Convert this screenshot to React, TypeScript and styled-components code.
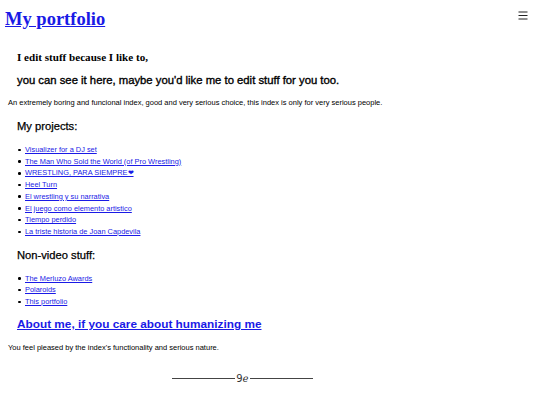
import styled, { createGlobalStyle } from "styled-components"

const GlobalStyle = createGlobalStyle`
  body {
    margin: 0;
    background: #ffffff;
    color: #000000;
    font-family: "Liberation Sans", Arial, sans-serif;
  }
`

const projects = [
  "Visualizer for a DJ set",
  "The Man Who Sold the World (of Pro Wrestling)",
  "WRESTLING, PARA SIEMPRE❤",
  "Heel Turn",
  "El wrestling y su narrativa",
  "El juego como elemento artistico",
  "Tiempo perdido",
  "La triste historia de Joan Capdevila",
]

const otherStuff = ["The Merluzo Awards", "Polaroids", "This portfolio"]

const App = () => (
  <>
    <GlobalStyle />
    <Page>
      <Header>
        <Title href="#">My portfolio</Title>
        <MenuButton aria-label="menu">
          <svg width="10" height="9" viewBox="0 0 10 9">
            <path d="M0.5 1h9M0.5 4.5h9M0.5 8h9" stroke="#222" strokeWidth="1" />
          </svg>
        </MenuButton>
      </Header>
      <Intro>
        <SerifLine>I edit stuff because I like to,</SerifLine>
        <Tagline>you can see it here, maybe you'd like me to edit stuff for you too.</Tagline>
      </Intro>
      <Small $gap={11}>
        An extremely boring and funcional index, good and very serious choice, this index is only for very serious people.
      </Small>
      <Section>
        <SectionTitle>My projects:</SectionTitle>
        <List>
          {projects.map((p) => (
            <Item key={p}>
              <ItemLink href="#">{p}</ItemLink>
            </Item>
          ))}
        </List>
        <SectionTitle>Non-video stuff:</SectionTitle>
        <List>
          {otherStuff.map((p) => (
            <Item key={p}>
              <ItemLink href="#">{p}</ItemLink>
            </Item>
          ))}
        </List>
        <AboutLink href="#">About me, if you care about humanizing me</AboutLink>
      </Section>
      <Small $gap={12}>You feel pleased by the index's functionality and serious nature.</Small>
      <Divider>
        <Rule />
        <Ornament>9ℯ</Ornament>
        <Rule />
      </Divider>
    </Page>
  </>
)

const Page = styled.div`
  width: 540px;
  height: 405px;
  overflow: hidden;
`

const Header = styled.header`
  display: flex;
  justify-content: space-between;
  align-items: flex-start;
  padding: 7px 12px 0 5px;
  height: 24px;
`

const Title = styled.a`
  font-family: "Liberation Serif", "Times New Roman", serif;
  font-weight: bold;
  font-size: 18.5px;
  line-height: 24px;
  color: #1a1ae6;
`

const MenuButton = styled.button`
  border: 0;
  background: none;
  padding: 0;
  margin-top: 4px;
  display: flex;
`

const Intro = styled.div`
  padding: 19px 0 0 17px;
`

const SerifLine = styled.h2`
  margin: 0;
  font-family: "Liberation Serif", "Times New Roman", serif;
  font-weight: bold;
  font-size: 11.1px;
  line-height: 14px;
`

const Tagline = styled.h2`
  margin: 9px 0 0;
  font-weight: normal;
  font-size: 11.3px;
  line-height: 14px;
  -webkit-text-stroke: 0.35px #000;
`

const Small = styled.p<{ $gap: number }>`
  margin: ${(p) => p.$gap}px 0 0 8px;
  font-size: 7.5px;
  line-height: 10px;
`

const Section = styled.div`
  padding-left: 17px;
  margin-top: 11px;
`

const SectionTitle = styled.h3`
  margin: 0;
  font-size: 11.2px;
  font-weight: normal;
  line-height: 14px;
  -webkit-text-stroke: 0.25px #000;
`

const List = styled.ul`
  margin: 11px 0 10px;
  padding: 0;
  list-style: none;
  font-size: 7.4px;
  line-height: 11.7px;
`

const Item = styled.li`
  display: flex;
  align-items: center;

  &::before {
    content: "";
    width: 2.5px;
    height: 2.5px;
    border-radius: 50%;
    background: #000;
    margin: 0 4.5px 0 1px;
  }
`

const ItemLink = styled.a`
  color: #1a1ae6;
`

const AboutLink = styled.a`
  display: block;
  margin-top: -1px;
  font-size: 11.8px;
  font-weight: bold;
  line-height: 14px;
  color: #1a1ae6;
`

const Divider = styled.div`
  display: flex;
  align-items: center;
  width: 141px;
  height: 12px;
  margin: 20px 0 0 172px;
`

const Rule = styled.div`
  flex: 1;
  height: 1px;
  background: #444;
`

const Ornament = styled.span`
  font-family: "DejaVu Sans", sans-serif;
  font-size: 10px;
  line-height: 12px;
  color: #333;
  padding: 0 1px;
`

export default App
